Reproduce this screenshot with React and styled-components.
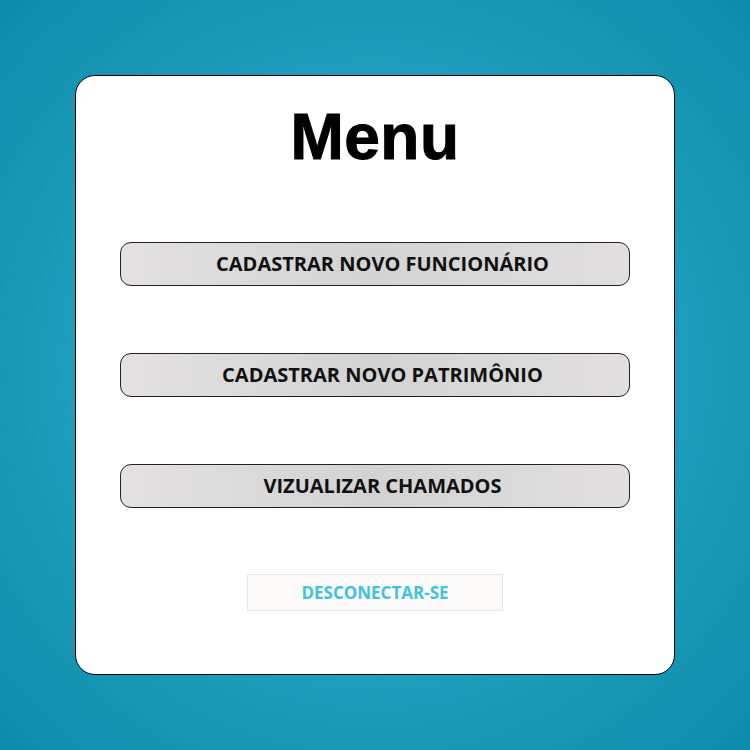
import React from "react";
import styled, { createGlobalStyle } from "styled-components";

const GlobalStyle = createGlobalStyle`
  html, body {
    margin: 0;
    padding: 0;
  }
  body {
    font-family: "Open Sans", "Liberation Sans", sans-serif;
  }
`;

const items = [
  "CADASTRAR NOVO FUNCIONÁRIO",
  "CADASTRAR NOVO PATRIMÔNIO",
  "VIZUALIZAR CHAMADOS",
];

const App = () => {
  return (
    <Page>
      <GlobalStyle />
      <Card>
        <Title>Menu</Title>
        <MenuList>
          {items.map((label) => (
            <MenuButton key={label}>{label}</MenuButton>
          ))}
          <LogoutButton>DESCONECTAR-SE</LogoutButton>
        </MenuList>
      </Card>
    </Page>
  );
};

const Page = styled.div`
  width: 750px;
  height: 750px;
  display: flex;
  align-items: center;
  justify-content: center;
  background: radial-gradient(
    circle at center,
    #2aaac6 0%,
    #22a3c0 45%,
    #0e8baa 100%
  );
`;

const Card = styled.div`
  box-sizing: border-box;
  width: 600px;
  height: 600px;
  margin-top: -1px;
  background: #ffffff;
  border: 1px solid #000;
  border-radius: 20px;
  display: flex;
  flex-direction: column;
  align-items: center;
  padding: 29px 44px 0;
`;

const Title = styled.h1`
  margin: 0;
  font-family: "Liberation Sans", Arial, sans-serif;
  font-weight: 700;
  font-size: 64px;
  line-height: 64px;
  letter-spacing: 0.5px;
  color: #000;
  -webkit-text-stroke: 1px #000;
`;

const MenuList = styled.div`
  width: 100%;
  display: flex;
  flex-direction: column;
  align-items: center;
  gap: 67px;
  margin-top: 73px;
`;

const MenuButton = styled.button`
  box-sizing: border-box;
  width: 100%;
  height: 44px;
  padding: 0 0 0 15px;
  border: 1px solid #222;
  border-radius: 11px;
  background: linear-gradient(90deg, #e3e1e1 0%, #d3d3d4 50%, #e1dfdf 100%);
  font-family: "Open Sans", sans-serif;
  font-weight: 700;
  font-size: 20px;
  color: #111;
  cursor: pointer;
`;

const LogoutButton = styled.button`
  box-sizing: border-box;
  width: 256px;
  height: 37px;
  margin-top: -1px;
  border: 1px solid #e8e6e6;
  border-radius: 0;
  background: #fcf9f9;
  font-family: "Open Sans", sans-serif;
  font-weight: 700;
  font-size: 17px;
  color: #3ec3de;
  cursor: pointer;
`;

export default App;
